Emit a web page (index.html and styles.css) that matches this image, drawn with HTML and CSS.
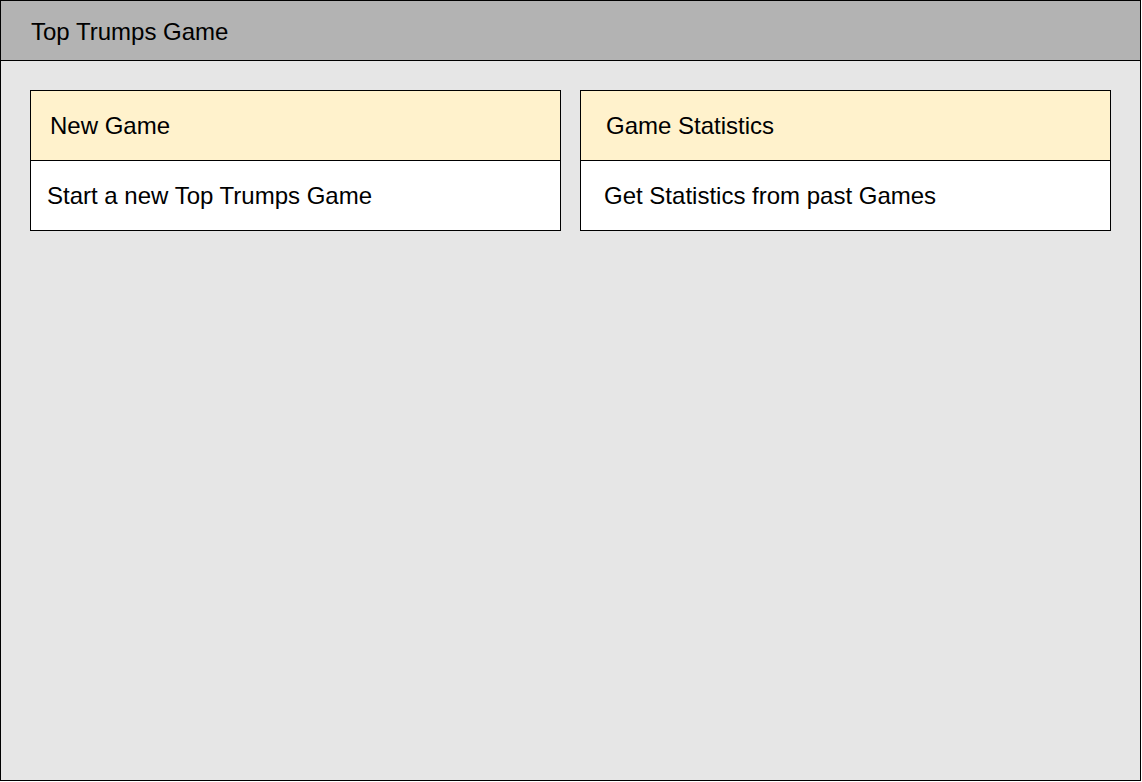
FILE: index.html
```html
<!DOCTYPE html>
<html>
<head>
<meta charset="utf-8">
<link rel="stylesheet" href="styles.css">
</head>
<body>
<div class="frame">
  <header class="topbar"><span class="title">Top Trumps Game</span></header>
  <main class="content">
    <section class="card">
      <div class="card-head pad-a">New Game</div>
      <div class="card-body pad-b">Start a new Top Trumps Game</div>
    </section>
    <section class="card">
      <div class="card-head pad-c">Game Statistics</div>
      <div class="card-body pad-d">Get Statistics from past Games</div>
    </section>
  </main>
</div>
</body>
</html>
```
FILE: styles.css
```css
html, body {
  margin: 0;
  padding: 0;
  background: #ffffff;
}
body {
  font-family: "Liberation Sans", Arial, sans-serif;
  color: #000;
}
.frame {
  width: 1141px;
  height: 781px;
  box-sizing: border-box;
  border: 1px solid #000;
  background: #e6e6e6;
  display: flex;
  flex-direction: column;
}
.topbar {
  height: 60px;
  box-sizing: border-box;
  background: #b3b3b3;
  border-bottom: 1px solid #000;
  display: flex;
  align-items: center;
  padding-left: 30px;
  padding-top: 2px;
  font-size: 24px;
}
.content {
  padding: 29px;
  display: grid;
  grid-template-columns: 531px 531px;
  column-gap: 19px;
  align-items: start;
}
.card {
  border: 1px solid #000;
  background: #fff;
  font-size: 24px;
}
.card-head {
  height: 70px;
  box-sizing: border-box;
  background: #fff2cc;
  border-bottom: 1px solid #000;
  display: flex;
  align-items: center;
  padding-top: 1px;
}
.card-body {
  height: 69px;
  box-sizing: border-box;
  display: flex;
  align-items: center;
  background: #fff;
  padding-top: 1px;
}
.pad-a { padding-left: 19px; }
.pad-b { padding-left: 16px; }
.pad-c { padding-left: 25px; }
.pad-d { padding-left: 23px; }
```
